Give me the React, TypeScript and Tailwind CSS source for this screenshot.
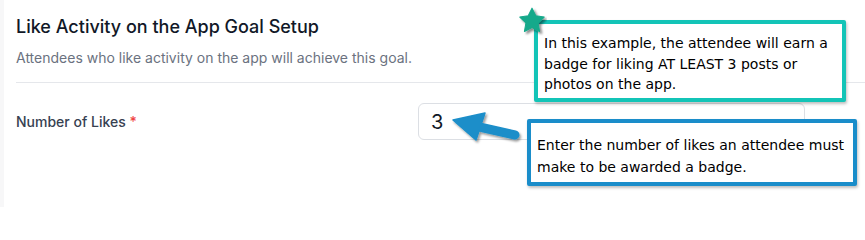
export default function App() {
  return (
    <div className="relative w-[865px] h-[207px] overflow-hidden bg-white shadow-[inset_4px_0_0_#f7f7f8] font-['Inter',sans-serif]">
      <div className="pl-4 pt-[15px]">
        <h1 className="text-lg font-medium leading-6 text-[#111827]">Like Activity on the App Goal Setup</h1>
        <p className="mt-[9px] text-sm leading-5 text-[#6b7280]">
          Attendees who like activity on the app will achieve this goal.
        </p>
        <div className="mt-[14px] h-px bg-[#e5e7eb]" />
        <div className="flex items-start pt-5">
          <label className="w-[402px] pt-[9px] text-sm font-medium leading-5 text-[#374151]">
            Number of Likes <span className="text-[#ef4444]">*</span>
          </label>
          <div className="w-[387px] h-[37px] rounded-md border border-[#dcdfe4] bg-white px-3 flex items-center text-xl text-[#111827]">
            3
          </div>
        </div>
      </div>

      {/* annotation: teal callout */}
      <div className="absolute left-[534px] top-[20px] w-[312px] h-[82px] border-4 border-[#13c4b7] bg-white rounded-[2px] shadow-[1px_2px_3px_rgba(0,0,0,0.25)] px-[6px] pt-[9px] font-['DejaVu_Sans',sans-serif] text-[14px] leading-[20.5px] text-black">
        In this example, the attendee will earn a badge for liking AT LEAST 3 posts or photos on the app.
      </div>
      <svg className="absolute left-[517px] top-[6px]" width="30" height="30" viewBox="0 0 28 28">
        <defs>
          <filter id="sh" x="-30%" y="-30%" width="160%" height="160%">
            <feDropShadow dx="2" dy="2" stdDeviation="1.2" floodColor="#000" floodOpacity="0.45" />
          </filter>
        </defs>
        <polygon
          filter="url(#sh)"
          fill="#17a98b"
          stroke="#17a98b"
          strokeWidth="1"
          strokeLinejoin="round"
          points="14,2 17.53,9.15 25.41,10.29 19.71,15.85 21.05,23.71 14,20 6.95,23.71 8.29,15.85 2.59,10.29 10.47,9.15"
        />
      </svg>

      {/* annotation: blue callout */}
      <div className="absolute left-[527px] top-[119px] w-[330px] h-[67px] border-4 border-[#1a8dca] bg-white rounded-[2px] shadow-[1px_2px_3px_rgba(0,0,0,0.25)] px-[6px] pt-[11px] font-['DejaVu_Sans',sans-serif] text-[14px] leading-[22px] text-black">
        Enter the number of likes an attendee must make to be awarded a badge.
      </div>
      <svg className="absolute left-[445px] top-[104px]" width="86" height="46" viewBox="0 0 86 46">
        <defs>
          <filter id="ash" x="-20%" y="-30%" width="140%" height="160%">
            <feDropShadow dx="1.5" dy="2" stdDeviation="1.2" floodColor="#000" floodOpacity="0.4" />
          </filter>
        </defs>
        <g filter="url(#ash)" fill="#1b8ec9" stroke="#1b8ec9" strokeLinejoin="round">
          <line x1="30" y1="22" x2="70" y2="31" strokeWidth="9" strokeLinecap="round" />
          <polygon points="8,16 40,9 31,36" strokeWidth="1.5" />
        </g>
      </svg>
    </div>
  );
}
